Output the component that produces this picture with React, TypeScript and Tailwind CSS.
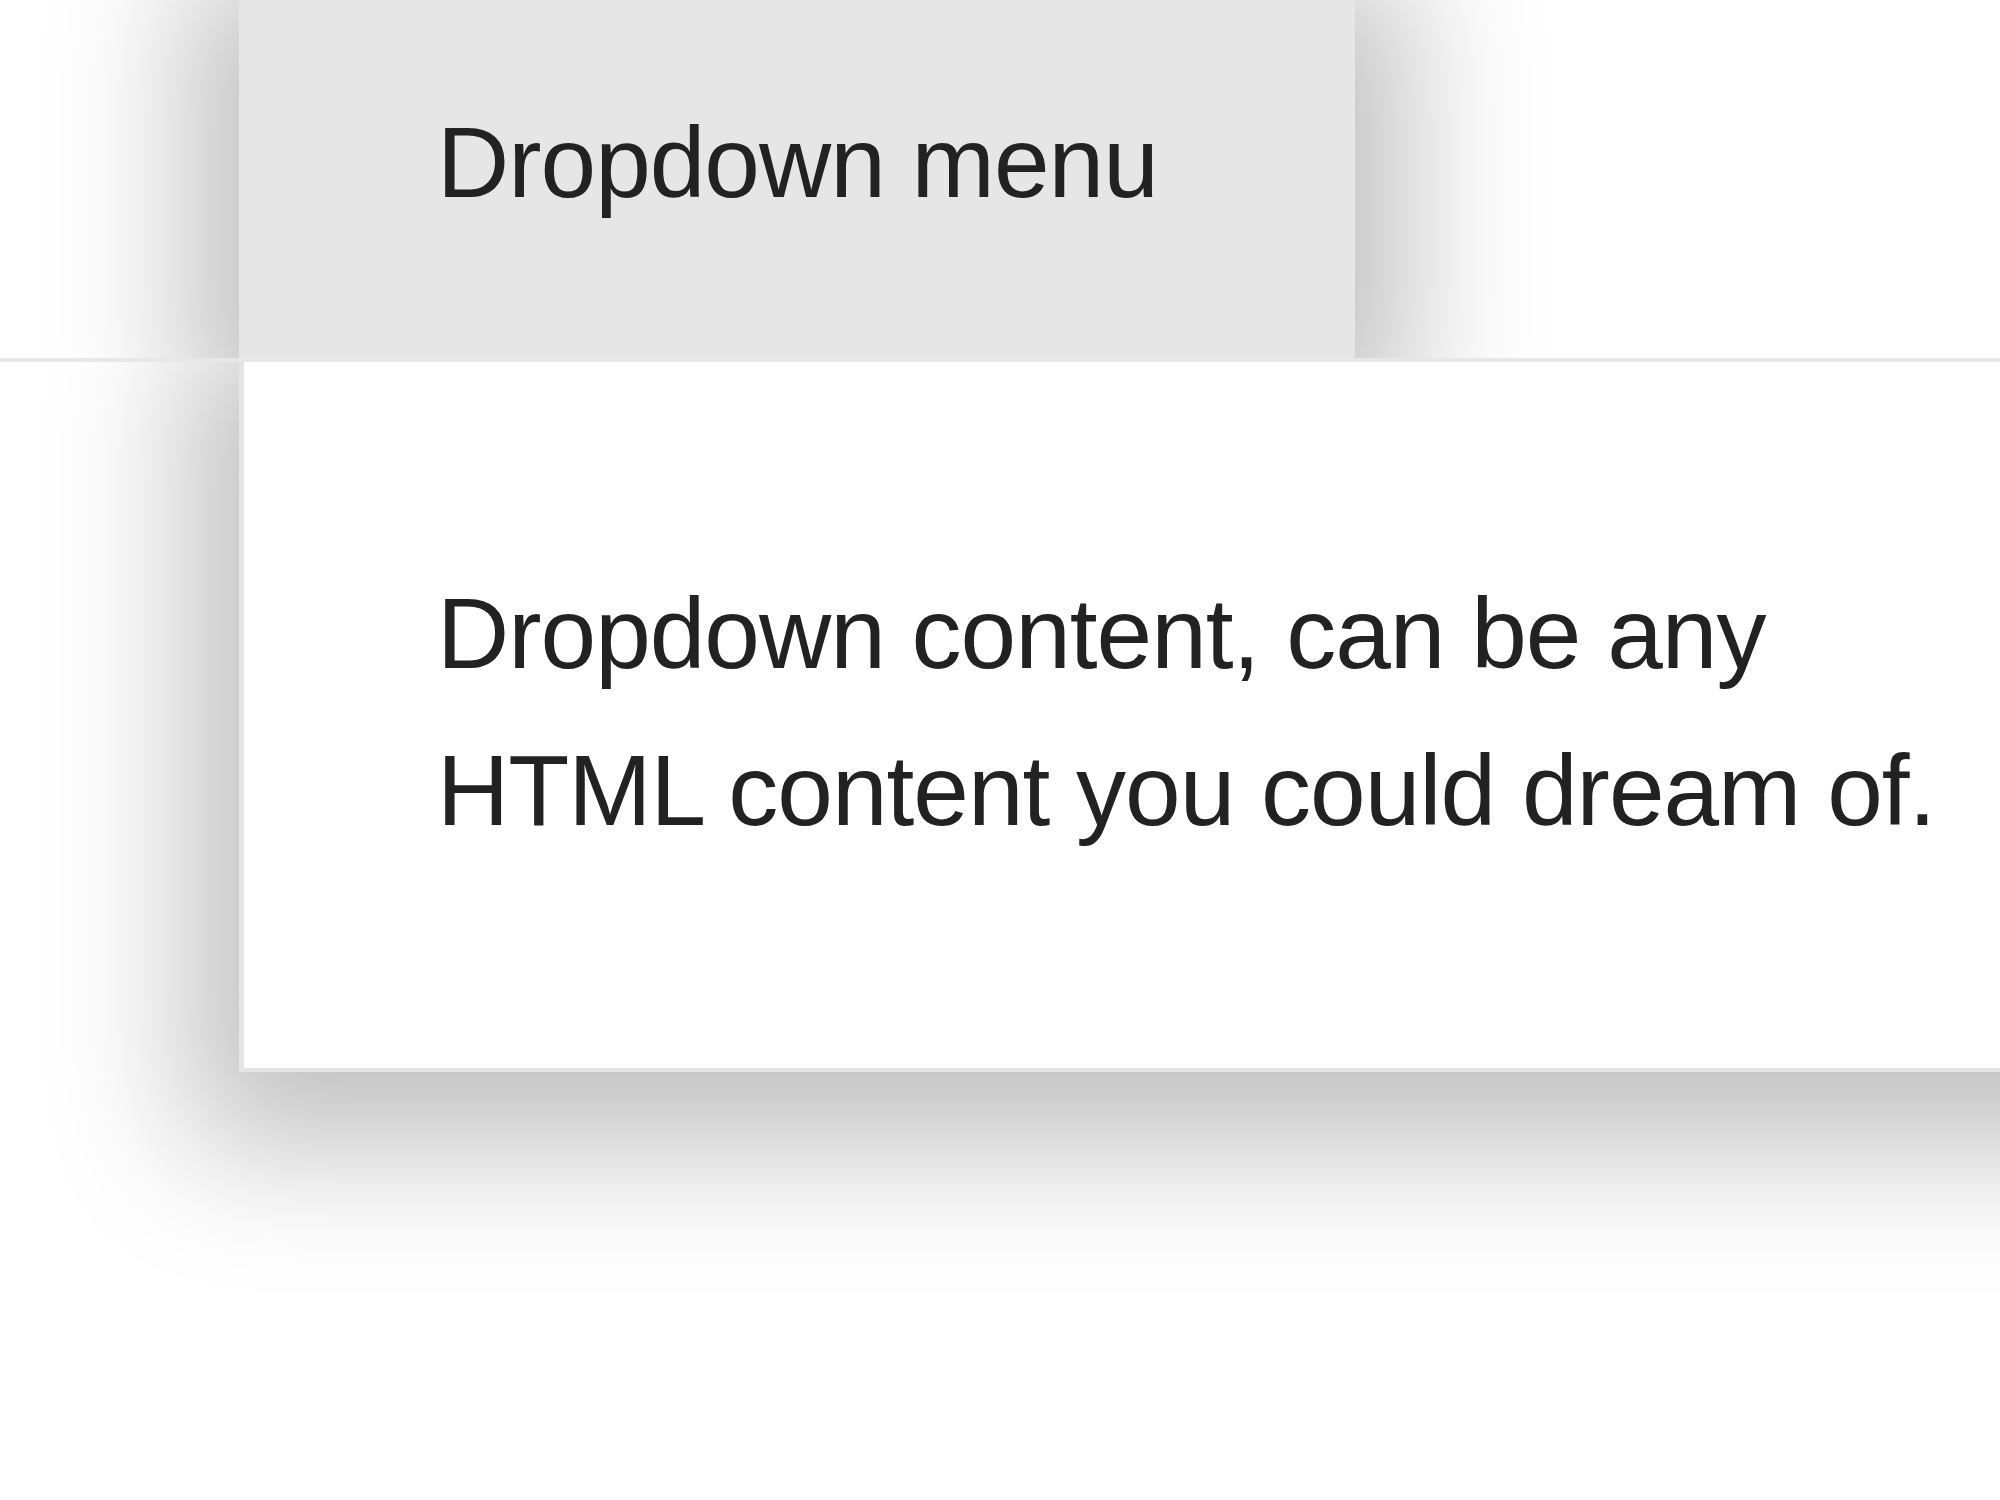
import { FC } from "react";

const Navbar: FC = () => {
    return (
        <nav className="relative z-10 flex h-[362px] overflow-hidden border-b-4 border-[#e7e7e7] bg-white">
            <div className="ml-[239px] h-[362px] w-[1116px] shrink-0 bg-[#e6e6e6] pl-[198px] pt-[84px] text-[100px] leading-[157px] tracking-[-1px] shadow-[0_20px_130px_50px_rgba(0,0,0,0.25)]">
                Dropdown menu
            </div>
        </nav>
    );
};

const DropdownPanel: FC = () => {
    return (
        <div className="absolute left-[239px] top-[362px] h-[710px] w-[2000px] border-b-4 border-l-[5px] border-[#e5e5e5] bg-white pl-[193px] pt-[193px] shadow-[0_24px_130px_50px_rgba(0,0,0,0.25)]">
            <p className="text-[100px] leading-[157px] tracking-[-1px]">
                Dropdown content, can be any
                <br />
                HTML content you could dream of.
            </p>
        </div>
    );
};

export default function App() {
    return (
        <div className="relative h-[1500px] w-[2000px] overflow-hidden bg-white font-['Liberation_Sans',Arial,sans-serif] text-[#222222]">
            <Navbar />
            <DropdownPanel />
        </div>
    );
}
